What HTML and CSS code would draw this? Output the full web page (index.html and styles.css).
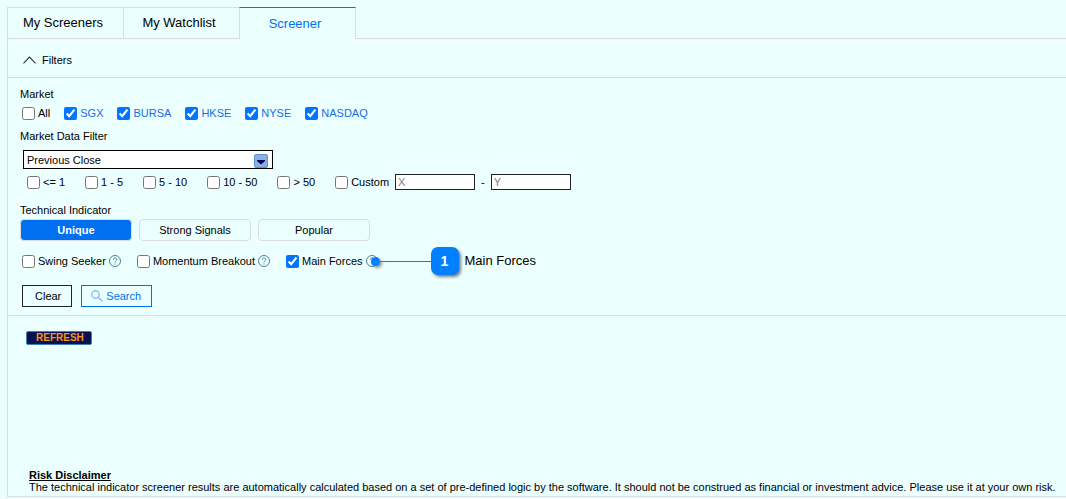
FILE: index.html
```
<!DOCTYPE html>
<html lang="en">
<head>
<meta charset="UTF-8">
<meta name="viewport" content="width=device-width, initial-scale=1.0">
<title>Screener</title>
<link rel="stylesheet" href="styles.css">
</head>
<body>
<div class="page">
    <nav class="tabs">
        <a href="#screeners" class="tab">My Screeners</a>
        <a href="#watchlist" class="tab">My Watchlist</a>
        <a href="#screener" class="tab active">Screener</a>
    </nav>
    <main class="panel">
        <button type="button" class="toggle">
            <svg width="13" height="8" viewBox="0 0 13 8"><path d="M.5 7.3 6.5 1l6 6.3" fill="none" stroke="#333" stroke-width="1.1"/></svg>
            Filters
        </button>
        <form class="filters">
            <div class="title">Market</div>
            <div class="row market">
                <label class="check"><input type="checkbox">All</label>
                <label class="check blue"><input type="checkbox" checked>SGX</label>
                <label class="check blue"><input type="checkbox" checked>BURSA</label>
                <label class="check blue"><input type="checkbox" checked>HKSE</label>
                <label class="check blue"><input type="checkbox" checked>NYSE</label>
                <label class="check blue"><input type="checkbox" checked>NASDAQ</label>
            </div>
            <label class="title" for="price">Market Data Filter</label>
            <div class="select">
                <select id="price">
                    <option>Previous Close</option>
                </select>
                <svg class="arrow" width="14" height="14" viewBox="0 0 14 14"><rect x=".5" y=".5" width="13" height="13" rx="1.5" fill="#8caee0" stroke="#5b93d3"/><path d="M3 6h8v1l-4 3.5L3 7z" fill="#05055c"/></svg>
            </div>
            <div class="row range">
                <label class="check"><input type="checkbox">&lt;= 1</label>
                <label class="check"><input type="checkbox">1 - 5</label>
                <label class="check"><input type="checkbox">5 - 10</label>
                <label class="check"><input type="checkbox">10 - 50</label>
                <label class="check"><input type="checkbox">&gt; 50</label>
                <div class="custom">
                    <label class="check"><input type="checkbox">Custom</label>
                    <input type="text" class="num" placeholder="X" aria-label="From">
                    <span>-</span>
                    <input type="text" class="num" placeholder="Y" aria-label="To">
                </div>
            </div>
            <div class="title">Technical Indicator</div>
            <div class="groups">
                <button type="button" class="group on">Unique</button>
                <button type="button" class="group">Strong Signals</button>
                <button type="button" class="group">Popular</button>
            </div>
            <div class="row signals">
                <div class="signal">
                    <label class="check"><input type="checkbox">Swing Seeker</label>
                    <svg class="help" width="12" height="12" viewBox="0 0 12 12"><circle cx="6" cy="6" r="5.5"/><path d="M4.3 4.7c0-2.3 3.5-2.3 3.5-.1C7.8 5.9 6 5.9 6 7.4M6 8.5v1"/></svg>
                </div>
                <div class="signal">
                    <label class="check"><input type="checkbox">Momentum Breakout</label>
                    <svg class="help" width="12" height="12" viewBox="0 0 12 12"><circle cx="6" cy="6" r="5.5"/><path d="M4.3 4.7c0-2.3 3.5-2.3 3.5-.1C7.8 5.9 6 5.9 6 7.4M6 8.5v1"/></svg>
                </div>
                <div class="signal">
                    <label class="check"><input type="checkbox" checked>Main Forces</label>
                    <svg class="help" width="12" height="12" viewBox="0 0 12 12"><circle cx="6" cy="6" r="5.5"/><path d="M4.3 4.7c0-2.3 3.5-2.3 3.5-.1C7.8 5.9 6 5.9 6 7.4M6 8.5v1"/></svg>
                    <div class="callout">
                        <i class="dot"></i>
                        <i class="line"></i>
                        <b class="badge">1</b>
                        <span class="note">Main Forces</span>
                    </div>
                </div>
            </div>
            <div class="actions">
                <button type="reset" class="btn clear">Clear</button>
                <button type="button" class="btn search">
                    <svg width="12" height="12" viewBox="0 0 12 12"><circle cx="4.5" cy="4.5" r="3.7"/><path d="m7.2 7.2 4.3 4.3"/></svg>
                    Search
                </button>
            </div>
        </form>
        <section class="result">
            <button type="button" class="refresh">REFRESH</button>
            <div class="risk">
                <h2>Risk Disclaimer</h2>
                <p>The technical indicator screener results are automatically calculated based on a set of pre-defined logic by the software. It should not be construed as financial or investment advice. Please use it at your own risk.</p>
            </div>
        </section>
    </main>
</div>
</body>
</html>
```
FILE: styles.css
```
* {
    box-sizing: border-box;
}
body {
    margin: 0;
    background: #ebffff;
    color: #000;
    font: 11px/16px "Liberation Sans", Arial, sans-serif;
}
button, input, select {
    margin: 0;
    font: inherit;
    color: inherit;
}
svg {
    flex: none;
}
.page {
    display: flex;
    flex-direction: column;
    min-height: 100vh;
    padding: 7px 0 2px 7px;
}
/* tabs */
.tabs {
    display: flex;
    height: 32px;
}
.tabs::after {
    content: "";
    flex: 1;
    border-bottom: 1px solid #dcdcdc;
}
.tab {
    width: 116px;
    padding-right: 5px;
    border: 1px solid #dcdcdc;
    border-right: 0;
    font-size: 13px;
    line-height: 30px;
    text-align: center;
    text-decoration: none;
    color: #000;
}
.tab.active {
    width: 117px;
    border-right: 1px solid #dcdcdc;
    border-top-color: #0070f0;
    border-bottom: 0;
    line-height: 32px;
    color: #0070f0;
}
/* panel */
.panel {
    display: flex;
    flex: 1;
    flex-direction: column;
    border: solid #dcdcdc;
    border-width: 0 0 1px 1px;
}
.toggle {
    display: flex;
    align-items: center;
    gap: 6px;
    height: 39px;
    padding: 4px 15px 0;
    border: 0;
    border-bottom: 1px solid #dcdcdc;
    background: none;
}
.filters {
    padding: 8px 12px;
    border-bottom: 1px solid #dcdcdc;
}
.title {
    display: block;
}
.row {
    display: flex;
    align-items: center;
    height: 20px;
}
.market {
    gap: 14px;
    margin: 1px 2px 5px;
}
.check {
    display: flex;
    align-items: center;
    gap: 3px;
    white-space: nowrap;
}
.check input {
    width: 13px;
    height: 13px;
}
.blue {
    color: #1c6be0;
}
.select {
    position: relative;
    width: 250px;
    margin: 6px 3px 3px;
}
.select select {
    display: block;
    width: 100%;
    height: 19px;
    padding: 0 3px;
    border: 1px solid #000;
    border-radius: 0;
    background: #fff;
    appearance: none;
}
.arrow {
    position: absolute;
    top: 4px;
    right: 5px;
    pointer-events: none;
}
.range {
    gap: 20px;
    margin: 0 7px 10px;
}
.custom {
    display: flex;
    align-items: center;
    gap: 6px;
}
.num {
    width: 80px;
    height: 16px;
    padding: 0 2px;
    border: 1px solid #222;
    background: #fff;
}
.num::placeholder {
    color: #808080;
}
.groups {
    display: flex;
    gap: 7px;
    margin: 1px 0 10px;
}
.group {
    width: 112px;
    height: 22px;
    padding: 0;
    border: 1px solid #dcdcdc;
    border-radius: 4px;
    background: none;
}
.group.on {
    background: #0070f0;
    font-weight: bold;
    color: #fff;
}
.signals {
    gap: 16px;
    margin: 0 2px 14px;
}
.signal {
    position: relative;
    display: flex;
    align-items: center;
    gap: 3px;
}
.help {
    fill: none;
    stroke: #4d8296;
}
/* callout lies over the help icon */
.callout {
    position: absolute;
    top: 50%;
    left: 100%;
    display: flex;
    align-items: center;
    margin-left: -7px;
    transform: translateY(-50%);
}
.dot {
    width: 9px;
    height: 9px;
    border-radius: 50%;
    background: #0080ff;
    box-shadow: 2px 2px 3px rgba(0, 0, 0, .4);
}
.line {
    width: 51px;
    height: 1px;
    background: #0080ff;
}
.badge {
    width: 28px;
    height: 28px;
    border-radius: 7px;
    background: #0080ff;
    box-shadow: 2px 2px 3px rgba(0, 0, 0, .5);
    font-size: 14px;
    line-height: 28px;
    text-align: center;
    color: #fff;
}
.note {
    margin-left: 6px;
    font-size: 13px;
    white-space: nowrap;
}
.actions {
    display: flex;
    gap: 9px;
    margin: 0 2px;
}
.btn {
    display: flex;
    align-items: center;
    gap: 3px;
    height: 22px;
    padding: 0 10px 0 12px;
    border: 1px solid #222;
    background: none;
}
.search {
    padding: 0 10px 0 9px;
    border-color: #0070f0;
    color: #0070f0;
}
.search svg {
    fill: none;
    stroke: #87bdf5;
    stroke-width: 1.4;
}
.result {
    display: flex;
    flex: 1;
    flex-direction: column;
    align-items: flex-start;
    justify-content: space-between;
    padding: 15px 3px 3px 18px;
}
.refresh {
    height: 14px;
    padding: 0 7px 0 9px;
    border: 1px solid #3d7fc0;
    border-radius: 2px;
    background: #08104f;
    font-size: 10px;
    font-weight: bold;
    line-height: 12px;
    color: #ff930f;
}
.risk {
    padding-left: 3px;
    line-height: 12px;
}
.risk h2 {
    margin: 0;
    font-size: 11px;
    text-decoration: underline;
}
.risk p {
    margin: 0;
}
```
